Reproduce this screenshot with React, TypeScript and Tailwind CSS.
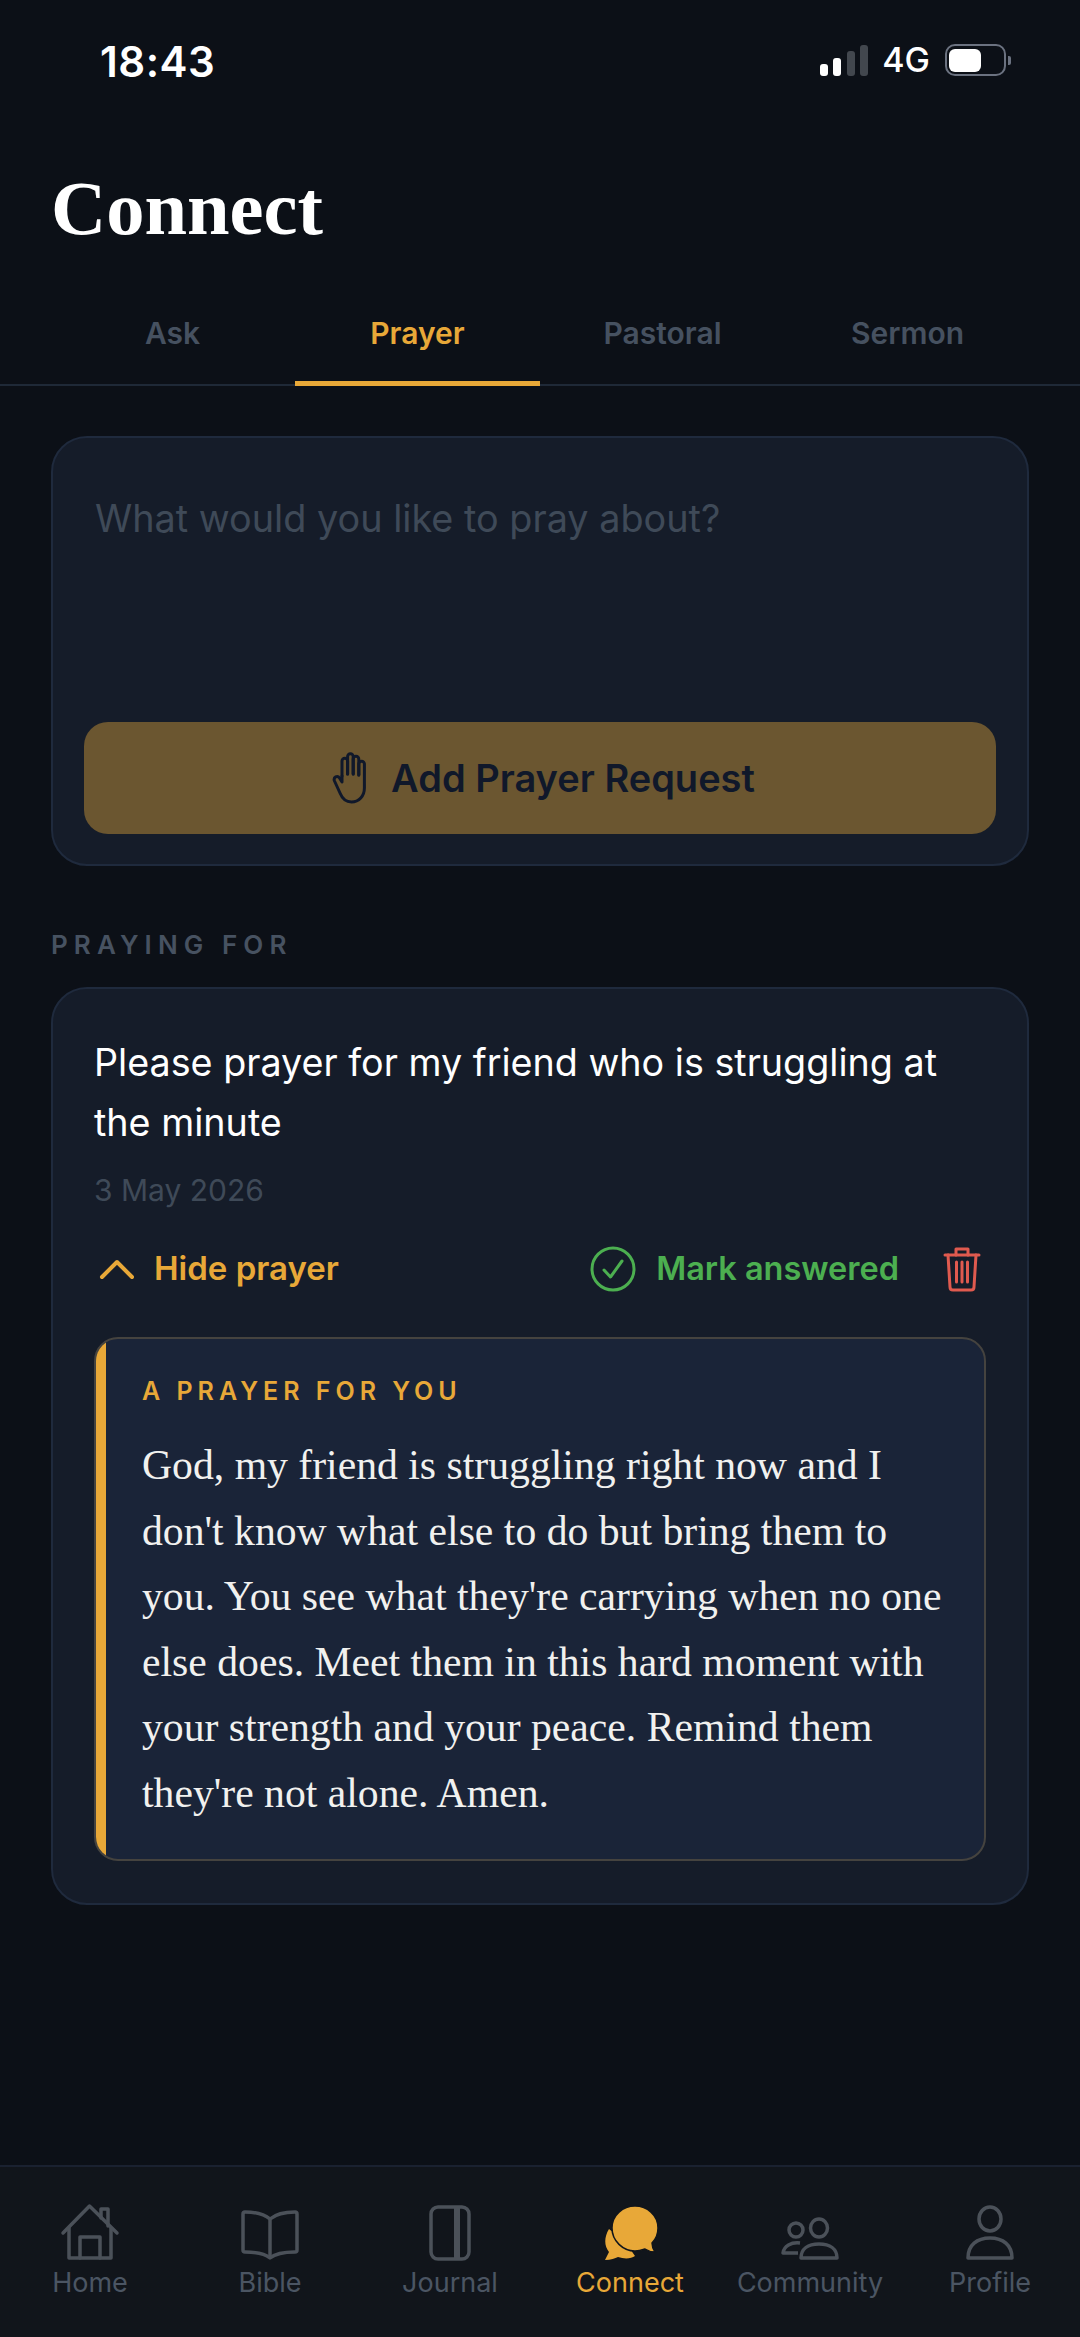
import React from "react";

const SANS = "font-['Inter','Liberation_Sans',sans-serif]";
const SERIF = "font-['Liberation_Serif',serif]";

const prayerLines = [
  "God, my friend is struggling right now and I",
  "don't know what else to do but bring them to",
  "you. You see what they're carrying when no one",
  "else does. Meet them in this hard moment with",
  "your strength and your peace. Remind them",
  "they're not alone. Amen.",
];

const HomeIcon = () => (
  <svg width="60" height="58" viewBox="0 0 60 58" fill="none" stroke="currentColor" strokeWidth="3.5" strokeLinejoin="round" strokeLinecap="round">
    <path d="M3 30 L29.5 3 L57 30" />
    <path d="M41 15 V6 H48 V23" />
    <path d="M9 25 V55 H51 V25" />
    <path d="M20 55 V34 H40 V55" />
  </svg>
);

const BibleIcon = () => (
  <svg width="60" height="52" viewBox="0 0 60 52" fill="none" stroke="currentColor" strokeWidth="3.5" strokeLinejoin="round">
    <path d="M30 10 C24 5 15 3 5 3 Q3 3 3 5 V41 Q3 43 5 43 C15 43 24 44 30 49 C36 44 45 43 55 43 Q57 43 57 41 V5 Q57 3 55 3 C45 3 36 5 30 10 Z" />
    <path d="M30 10 V49" />
  </svg>
);

const JournalIcon = () => (
  <svg width="42" height="56" viewBox="0 0 42 56" fill="none" stroke="currentColor" strokeWidth="3.5">
    <rect x="2" y="2" width="38" height="52" rx="7" />
    <path d="M28 2 V54" strokeWidth="6" />
  </svg>
);

const ConnectIcon = () => (
  <svg width="56" height="56" viewBox="0 0 56 56">
    <path fill="#e8a838" d="M7 24 C2 32 2 41 7 47 L3 55 C9 55 13 53 16 52 C22 54 29 54 33 51 L24 38 Z" />
    <path fill="#e8a838" stroke="#11151b" strokeWidth="1.5" d="M33 1 C21 1 10 10 10 23 C10 36 21 46 33 46 C37 46 40 45 43 44 C46 46 49 47 53 47 C51 44 50 41 50 38 C54 34 56 29 56 23 C56 10 45 1 33 1 Z" />
  </svg>
);

const CommunityIcon = () => (
  <svg width="58" height="44" viewBox="0 0 58 44" fill="none" stroke="currentColor" strokeWidth="3.5" strokeLinejoin="round">
    <circle cx="15" cy="13" r="7" />
    <ellipse cx="38" cy="11" rx="8.5" ry="9" />
    <path d="M20 41 C20 32 27 27 38 27 C49 27 56 32 56 41 Z" />
    <path d="M19 26 C10 25 3 29 2 36 H17" />
  </svg>
);

const ProfileIcon = () => (
  <svg width="50" height="56" viewBox="0 0 50 56" fill="none" stroke="currentColor" strokeWidth="3.5" strokeLinejoin="round">
    <ellipse cx="25" cy="14" rx="11" ry="12" />
    <path d="M3 53 C3 40 12 33 25 33 C38 33 47 40 47 53 Z" />
  </svg>
);

const HandIcon = () => (
  <svg width="38" height="52" viewBox="0 0 38 52" fill="none" stroke="#10182a" strokeWidth="3" strokeLinecap="round" strokeLinejoin="round">
    <path d="M10 24 V9 a2.8 2.8 0 0 1 5.6 0 V22" />
    <path d="M15.6 22 V4.5 a2.8 2.8 0 0 1 5.6 0 V22" />
    <path d="M21.2 22 V7 a2.8 2.8 0 0 1 5.6 0 V23" />
    <path d="M26.8 23 V12 a2.8 2.8 0 0 1 5.6 0 V36 C32.4 44 27 50 19.5 50 C13 50 10 46 8 41 L2.5 29 C1 25 5.5 23 7.5 26 L10 30 V24" />
  </svg>
);

const ChevronIcon = () => (
  <svg width="36" height="22" viewBox="0 0 36 22" fill="none" stroke="#e8a838" strokeWidth="4" strokeLinecap="round" strokeLinejoin="round">
    <path d="M3 19 L18 4 L33 19" />
  </svg>
);

const CheckCircleIcon = () => (
  <svg width="46" height="46" viewBox="0 0 46 46" fill="none" stroke="#4caf50" strokeWidth="3" strokeLinecap="round" strokeLinejoin="round">
    <circle cx="23" cy="23" r="21" />
    <path d="M14 24 L20.5 31 L32 15" />
  </svg>
);

const TrashIcon = () => (
  <svg width="38" height="46" viewBox="0 0 38 46" fill="none" stroke="#e05a4f" strokeWidth="3" strokeLinecap="round" strokeLinejoin="round">
    <path d="M2 9 H36" />
    <path d="M13 9 V3 H25 V9" />
    <path d="M5 9 L7 41 Q7 44 10 44 H28 Q31 44 31 41 L33 9" />
    <path d="M13.5 16 V36 M19 16 V36 M24.5 16 V36" />
  </svg>
);

const StatusBar = () => (
  <div className="flex h-[88px] items-end justify-between pl-[100px] pr-[69px] pb-[1px] text-white">
    <span className="text-[42px] font-semibold leading-[50px] tracking-[0.5px]">18:43</span>
    <div className="flex items-center pb-[10px]">
      <div className="flex items-end gap-[5.5px]">
        <span className="h-[12px] w-[8px] rounded-[3px] bg-white" />
        <span className="h-[18px] w-[8px] rounded-[3px] bg-white" />
        <span className="h-[25px] w-[8px] rounded-[3px] bg-[#42474e]" />
        <span className="h-[31px] w-[8px] rounded-[3px] bg-[#42474e]" />
      </div>
      <span className="ml-[14px] text-[34px] font-medium leading-none">4G</span>
      <div className="ml-[15px] flex items-center">
        <div className="flex h-[32px] w-[61px] items-center rounded-[10px] border-[2px] border-[#6b7280] pl-[2px]">
          <span className="h-[23px] w-[32px] rounded-[6px] bg-white" />
        </div>
        <span className="ml-[2px] h-[9px] w-[3px] rounded-r-[2px] bg-[#6b7280]" />
      </div>
    </div>
  </div>
);

const tabs = ["Ask", "Prayer", "Pastoral", "Sermon"];

const Tabs = () => (
  <div className="flex border-b-[2px] border-[#1f2937] px-[50px]">
    {tabs.map((t) => (
      <div
        key={t}
        className={
          t === "Prayer"
            ? "-mb-[2px] flex h-[86px] flex-1 items-start justify-center border-b-[5px] border-[#e8a838] pt-[15px] text-[30px] font-semibold leading-[36px] text-[#e8a838]"
            : "flex h-[84px] flex-1 items-start justify-center pt-[15px] text-[30px] font-semibold leading-[36px] text-[#465160]"
        }
      >
        {t}
      </div>
    ))}
  </div>
);

const navItems = [
  { label: "Home", icon: <HomeIcon /> },
  { label: "Bible", icon: <BibleIcon /> },
  { label: "Journal", icon: <JournalIcon /> },
  { label: "Connect", icon: <ConnectIcon />, active: true },
  { label: "Community", icon: <CommunityIcon /> },
  { label: "Profile", icon: <ProfileIcon /> },
];

const BottomNav = () => (
  <div className="grid h-[172px] grid-cols-6 border-t-[2px] border-[#1a2130] bg-[#11151b] pt-[36px]">
    {navItems.map((n) => (
      <div key={n.label} className={n.active ? "flex flex-col items-center text-[#e8a838]" : "flex flex-col items-center text-[#4b5159]"}>
        <div className="flex h-[58px] items-end justify-center">{n.icon}</div>
        <span className={n.active ? "mt-[5px] text-[27px] leading-[34px]" : "mt-[5px] text-[27px] leading-[34px] text-[#4b5563]"}>{n.label}</span>
      </div>
    ))}
  </div>
);

export default function App() {
  return (
    <div className={`${SANS} flex h-[2337px] w-[1080px] flex-col overflow-hidden bg-[#0c1017]`}>
      <StatusBar />
      <h1 className={`${SERIF} mt-[77px] pl-[51px] text-[76.5px] font-bold leading-[88px] text-white`}>Connect</h1>
      <div className="mt-[47px]">
        <Tabs />
      </div>

      <main className="flex flex-1 flex-col px-[51px] pt-[50px]">
        <section className="h-[430px] rounded-[36px] border-[2px] border-[#1f2a3d] bg-[#151c29] px-[31px] pt-[54px]">
          <p className="h-[230px] pl-[11px] text-[37.8px] leading-[52px] text-[#3f4a58]">What would you like to pray about?</p>
          <button className="flex h-[112px] w-full items-center justify-center gap-[21px] rounded-[24px] bg-[#6b5630] pl-[7px] text-[38px] font-semibold text-[#10182a]">
            <HandIcon />
            Add Prayer Request
          </button>
        </section>

        <h2 className="mt-[63px] text-[26px] font-semibold leading-[32px] tracking-[6.1px] text-[#475261]">PRAYING FOR</h2>

        <section className="mt-[26px] h-[918px] rounded-[36px] border-[2px] border-[#1f2a3d] bg-[#151c29] px-[41px] pt-[43px]">
          <p className="pr-[20px] text-[37.7px] leading-[60px] text-white">Please prayer for my friend who is struggling at the minute</p>
          <p className="mt-[20px] text-[30px] leading-[36px] text-[#3f4a58]">3 May 2026</p>

          <div className="mt-[38px] flex h-[46px] items-center pl-[5px]">
            <ChevronIcon />
            <span className="ml-[19px] text-[33px] font-semibold text-[#e8a838]">Hide prayer</span>
            <div className="ml-auto flex items-center">
              <CheckCircleIcon />
              <span className="ml-[20px] text-[32.5px] font-semibold text-[#4caf50]">Mark answered</span>
              <span className="ml-[44px] mr-[5px] flex">
                <TrashIcon />
              </span>
            </div>
          </div>

          <div className="mt-[45px] flex h-[524px] overflow-hidden rounded-[24px] border-[2px] border-[#45433f] bg-[#1a2438]">
            <div className="w-[10px] bg-[#e8a838]" />
            <div className="pl-[36px] pt-[36px]">
              <p className="text-[25px] font-semibold leading-[32px] tracking-[5px] text-[#e8a838]">A PRAYER FOR YOU</p>
              <div className={`${SERIF} mt-[26px] text-[41.7px] leading-[65.6px] text-[#f1f1ef]`}>
                {prayerLines.map((l) => (
                  <p key={l} className="whitespace-nowrap">{l}</p>
                ))}
              </div>
            </div>
          </div>
        </section>
      </main>

      <BottomNav />
    </div>
  );
}
